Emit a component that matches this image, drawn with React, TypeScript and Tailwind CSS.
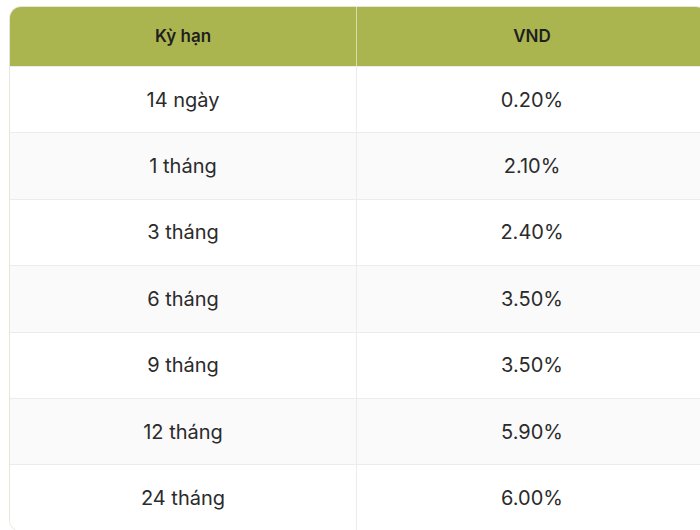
const rows = [
  ["14 ngày", "0.20%"],
  ["1 tháng", "2.10%"],
  ["3 tháng", "2.40%"],
  ["6 tháng", "3.50%"],
  ["9 tháng", "3.50%"],
  ["12 tháng", "5.90%"],
  ["24 tháng", "6.00%"],
];

export default function App() {
  return (
    <div className="w-[700px] h-[530px] overflow-hidden bg-white font-['Inter',sans-serif]">
      <div className="ml-[9px] mt-[6px] w-[699px] rounded-t-xl rounded-b-xl border border-[#e6e6dc] overflow-hidden">
        {/* Header */}
        <div className="grid grid-cols-[347px_1fr] h-[59px] bg-[#abb54f] text-[#1f1f1f] text-[17px] font-semibold">
          <div className="flex items-center justify-center border-r border-[#d7dcae]">Kỳ hạn</div>
          <div className="flex items-center justify-center">VND</div>
        </div>
        {/* Body */}
        {rows.map(([term, rate], i) => (
          <div
            key={term}
            className={
              "grid grid-cols-[347px_1fr] h-[66.4px] border-t border-[#ececf0] text-[20px] text-[#2b2b2b] " +
              (i % 2 === 1 ? "bg-[#fafafb]" : "bg-white")
            }
          >
            <div className="flex items-center justify-center border-r border-[#ececf0]">{term}</div>
            <div className="flex items-center justify-center">{rate}</div>
          </div>
        ))}
      </div>
    </div>
  );
}
